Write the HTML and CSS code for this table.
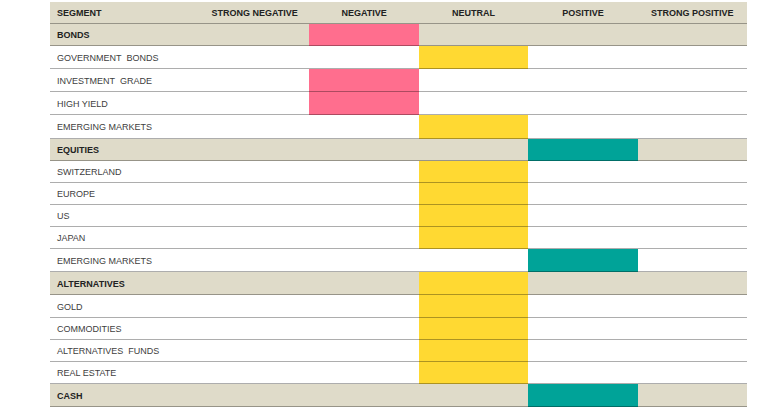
FILE: index.html
```html
<!DOCTYPE html>
<html>
<head>
<meta charset="utf-8">
<link rel="stylesheet" href="styles.css">
</head>
<body>
<div class="matrix">
  <div class="row head">
    <div class="cell seg">SEGMENT</div>
    <div class="cell">STRONG NEGATIVE</div>
    <div class="cell">NEGATIVE</div>
    <div class="cell">NEUTRAL</div>
    <div class="cell">POSITIVE</div>
    <div class="cell">STRONG POSITIVE</div>
  </div>
  <div class="row section">
    <div class="cell seg">BONDS</div>
    <div class="cell"></div><div class="cell neg"></div><div class="cell"></div><div class="cell"></div><div class="cell"></div>
  </div>
  <div class="row">
    <div class="cell seg">GOVERNMENT&nbsp; BONDS</div>
    <div class="cell"></div><div class="cell"></div><div class="cell neu"></div><div class="cell"></div><div class="cell"></div>
  </div>
  <div class="row">
    <div class="cell seg">INVESTMENT&nbsp; GRADE</div>
    <div class="cell"></div><div class="cell neg"></div><div class="cell"></div><div class="cell"></div><div class="cell"></div>
  </div>
  <div class="row">
    <div class="cell seg">HIGH YIELD</div>
    <div class="cell"></div><div class="cell neg"></div><div class="cell"></div><div class="cell"></div><div class="cell"></div>
  </div>
  <div class="row">
    <div class="cell seg">EMERGING MARKETS</div>
    <div class="cell"></div><div class="cell"></div><div class="cell neu"></div><div class="cell"></div><div class="cell"></div>
  </div>
  <div class="row section">
    <div class="cell seg">EQUITIES</div>
    <div class="cell"></div><div class="cell"></div><div class="cell"></div><div class="cell pos"></div><div class="cell"></div>
  </div>
  <div class="row">
    <div class="cell seg">SWITZERLAND</div>
    <div class="cell"></div><div class="cell"></div><div class="cell neu"></div><div class="cell"></div><div class="cell"></div>
  </div>
  <div class="row">
    <div class="cell seg">EUROPE</div>
    <div class="cell"></div><div class="cell"></div><div class="cell neu"></div><div class="cell"></div><div class="cell"></div>
  </div>
  <div class="row">
    <div class="cell seg">US</div>
    <div class="cell"></div><div class="cell"></div><div class="cell neu"></div><div class="cell"></div><div class="cell"></div>
  </div>
  <div class="row">
    <div class="cell seg">JAPAN</div>
    <div class="cell"></div><div class="cell"></div><div class="cell neu"></div><div class="cell"></div><div class="cell"></div>
  </div>
  <div class="row">
    <div class="cell seg">EMERGING MARKETS</div>
    <div class="cell"></div><div class="cell"></div><div class="cell"></div><div class="cell pos"></div><div class="cell"></div>
  </div>
  <div class="row section">
    <div class="cell seg">ALTERNATIVES</div>
    <div class="cell"></div><div class="cell"></div><div class="cell neu"></div><div class="cell"></div><div class="cell"></div>
  </div>
  <div class="row">
    <div class="cell seg">GOLD</div>
    <div class="cell"></div><div class="cell"></div><div class="cell neu"></div><div class="cell"></div><div class="cell"></div>
  </div>
  <div class="row">
    <div class="cell seg">COMMODITIES</div>
    <div class="cell"></div><div class="cell"></div><div class="cell neu"></div><div class="cell"></div><div class="cell"></div>
  </div>
  <div class="row">
    <div class="cell seg">ALTERNATIVES&nbsp; FUNDS</div>
    <div class="cell"></div><div class="cell"></div><div class="cell neu"></div><div class="cell"></div><div class="cell"></div>
  </div>
  <div class="row">
    <div class="cell seg">REAL ESTATE</div>
    <div class="cell"></div><div class="cell"></div><div class="cell neu"></div><div class="cell"></div><div class="cell"></div>
  </div>
  <div class="row section">
    <div class="cell seg">CASH</div>
    <div class="cell"></div><div class="cell"></div><div class="cell"></div><div class="cell pos"></div><div class="cell"></div>
  </div>
</div>
</body>
</html>
```
FILE: styles.css
```css
html, body {
  margin: 0;
  background: #ffffff;
}
body {
  padding: 2px 0 0 50px;
  font-family: "Liberation Sans", Arial, sans-serif;
}
.matrix {
  width: 697px;
  display: grid;
  grid-template-rows: 22px 22px 23px 23px 23px 24px 22px 22px 22px 22px 22px 23px 23px 23px 22px 22px 22px 23px;
}
.row {
  display: grid;
  grid-template-columns: 150px repeat(5, 1fr);
  position: relative;
  font-size: 9px;
  color: #404040;
}
.row::after {
  content: "";
  position: absolute;
  left: 0;
  right: 0;
  bottom: 0;
  height: 1.5px;
  background: rgba(0, 0, 0, 0.32);
}
.head, .section {
  background: #dfdbc9;
  font-weight: bold;
  color: #222222;
}
.head .cell {
  justify-content: center;
}
.head .seg {
  justify-content: flex-start;
}
.cell {
  display: flex;
  align-items: center;
}
.seg {
  padding-left: 7px;
}
.neg { background: #ff6e8e; }
.neu { background: #ffd932; }
.pos { background: #00a398; }
```
